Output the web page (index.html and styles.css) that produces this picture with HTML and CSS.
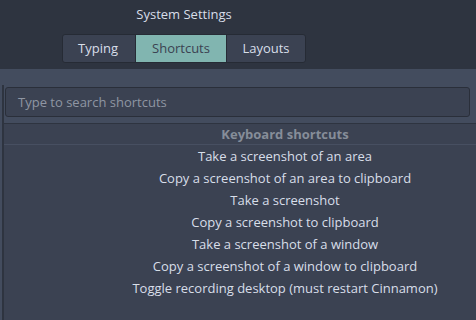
FILE: index.html
```html
<!DOCTYPE html>
<html>
<head>
<meta charset="utf-8">
<link rel="stylesheet" href="styles.css">
</head>
<body>
<div class="header">
  <div class="header-inner">
    <div class="title">System Settings</div>
    <div class="tabs">
      <div class="tab">Typing</div>
      <div class="tab active">Shortcuts</div>
      <div class="tab">Layouts</div>
    </div>
  </div>
</div>
<div class="content">
  <div class="frame">
    <div class="search">Type to search shortcuts</div>
    <div class="list">
      <div class="list-head">Keyboard shortcuts</div>
      <div class="row">Take a screenshot of an area</div>
      <div class="row">Copy a screenshot of an area to clipboard</div>
      <div class="row">Take a screenshot</div>
      <div class="row">Copy a screenshot to clipboard</div>
      <div class="row">Take a screenshot of a window</div>
      <div class="row">Copy a screenshot of a window to clipboard</div>
      <div class="row">Toggle recording desktop (must restart Cinnamon)</div>
    </div>
  </div>
</div>
</body>
</html>
```
FILE: styles.css
```css
html, body {
  margin: 0;
  height: 100%;
  overflow: hidden;
}
body {
  background: #434c5e;
  font-family: "Open Sans", "Noto Sans", sans-serif;
  font-size: 13px;
  color: #d8dee9;
  display: flex;
  flex-direction: column;
}
.header {
  background: #2e3440;
  height: 69px;
  flex: none;
}
.header-inner {
  width: 368px;
  display: flex;
  flex-direction: column;
  align-items: center;
}
.title {
  margin-top: 5px;
  height: 18px;
  line-height: 18px;
  color: #d8dee9;
}
.tabs {
  margin-top: 11px;
  display: flex;
  border: 1px solid #262b35;
  border-radius: 3px;
  background: #3b4252;
  overflow: hidden;
}
.tab {
  height: 27px;
  line-height: 27px;
  padding: 0 15px;
  color: #d8dee9;
  border-left: 1px solid #262b35;
}
.tab:first-child {
  border-left: none;
  width: 42px;
}
.tab.active {
  background: #81b5b0;
  color: #3b4252;
  width: 60px;
  text-align: center;
}
.tab:last-child {
  width: 48px;
  text-align: center;
}
.content {
  flex: 1;
  padding-top: 16px;
  padding-left: 2px;
  display: flex;
  min-width: 0;
}
.frame {
  flex: 1;
  min-width: 0;
  border-left: 2px solid #2e3440;
  display: flex;
  flex-direction: column;
}
.search {
  margin: 2px 0 0 1px;
  width: 451px;
  height: 28px;
  line-height: 28px;
  padding-left: 12px;
  border: 1px solid #2a2f3a;
  border-radius: 3px;
  background: #3b4252;
  color: #8f96a3;
}
.list {
  margin-top: 6px;
  flex: 1;
  background: #3b4252;
  border-top: 1px solid #2e3440;
}
.list-head {
  height: 20px;
  line-height: 21px;
  padding-left: 90px;
  text-align: center;
  font-weight: bold;
  color: #868d99;
  border-bottom: 1px solid #474f61;
}
.row {
  height: 22px;
  line-height: 22px;
  padding-left: 90px;
  text-align: center;
  color: #d8dee9;
}
```
